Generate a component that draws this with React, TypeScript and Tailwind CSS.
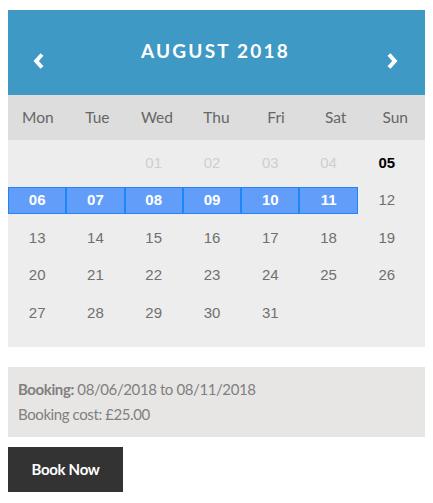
import React from "react";

const F = { fontFamily: "Lato, 'Open Sans', sans-serif" };
const NUM = { fontFamily: "'Liberation Sans', Arial, sans-serif" };

function Chevron({ dir }: { dir: "left" | "right" }) {
  return (
    <svg width="12" height="16" viewBox="0 0 12 16" className="mt-[16px]">
      {dir === "left" ? (
        <polyline points="9,1.5 3.2,8 9,14.5" fill="none" stroke="#fff" strokeWidth="4" strokeLinejoin="miter" />
      ) : (
        <polyline points="3,1.5 8.8,8 3,14.5" fill="none" stroke="#fff" strokeWidth="4" strokeLinejoin="miter" />
      )}
    </svg>
  );
}

type Cell = { d: string; kind: "empty" | "past" | "today" | "sel" | "norm" };

const rows: Cell[][] = [
  [
    { d: "", kind: "empty" },
    { d: "", kind: "empty" },
    { d: "01", kind: "past" },
    { d: "02", kind: "past" },
    { d: "03", kind: "past" },
    { d: "04", kind: "past" },
    { d: "05", kind: "today" },
  ],
  [
    { d: "06", kind: "sel" },
    { d: "07", kind: "sel" },
    { d: "08", kind: "sel" },
    { d: "09", kind: "sel" },
    { d: "10", kind: "sel" },
    { d: "11", kind: "sel" },
    { d: "12", kind: "norm" },
  ],
  ["13", "14", "15", "16", "17", "18", "19"].map((d) => ({ d, kind: "norm" as const })),
  ["20", "21", "22", "23", "24", "25", "26"].map((d) => ({ d, kind: "norm" as const })),
  [
    { d: "27", kind: "norm" },
    { d: "28", kind: "norm" },
    { d: "29", kind: "norm" },
    { d: "30", kind: "norm" },
    { d: "31", kind: "norm" },
    { d: "", kind: "empty" },
    { d: "", kind: "empty" },
  ],
];

function DayCell({ c }: { c: Cell }) {
  if (c.kind === "sel") {
    return (
      <div className="h-[37.6px] flex items-center">
        <div className="w-full h-[27px] bg-[#629ef9] border border-[#1e86f7] flex items-center justify-center text-white text-[15px] font-bold">
          {c.d}
        </div>
      </div>
    );
  }
  const cls =
    c.kind === "past"
      ? "text-[#cfcfcf]"
      : c.kind === "today"
      ? "text-black font-bold"
      : "text-[#707070]";
  return (
    <div className={`h-[37.6px] flex items-center justify-center text-[15px] ${cls}`}>{c.d}</div>
  );
}

export default function App() {
  return (
    <div className="bg-white w-[433px] h-[503px] pt-[10px] px-2" style={F}>
      <div className="h-[85px] bg-[#3e9ac4] flex items-center justify-between pl-[25px] pr-[27px]">
        <Chevron dir="left" />
        <div className="text-white text-[19px] font-bold tracking-[2.2px] mb-[3px]">AUGUST 2018</div>
        <Chevron dir="right" />
      </div>
      <div className="h-[45px] bg-[#dddddd] grid grid-cols-7 items-center text-[15.5px] text-[#666]">
        {["Mon", "Tue", "Wed", "Thu", "Fri", "Sat", "Sun"].map((d) => (
          <div key={d} className="text-center">
            {d}
          </div>
        ))}
      </div>
      <div className="bg-[#ededed] pt-[4px] pb-[15px]">
        <div className="w-[408px] grid grid-cols-7" style={NUM}>
          {rows.flat().map((c, i) => (
            <DayCell key={i} c={c} />
          ))}
        </div>
      </div>
      <div className="mt-[20px] bg-[#e8e6e5] px-[10px] py-[10px] text-[15px] tracking-[-0.4px] text-[#808080] leading-[25px]">
        <div>
          <span className="font-bold">Booking:</span> 08/06/2018 to 08/11/2018
        </div>
        <div>Booking cost: £25.00</div>
      </div>
      <button className="mt-[10px] h-[45px] w-[115px] bg-[#333333] text-white font-bold text-[15px] tracking-[-0.3px]">
        Book Now
      </button>
    </div>
  );
}
